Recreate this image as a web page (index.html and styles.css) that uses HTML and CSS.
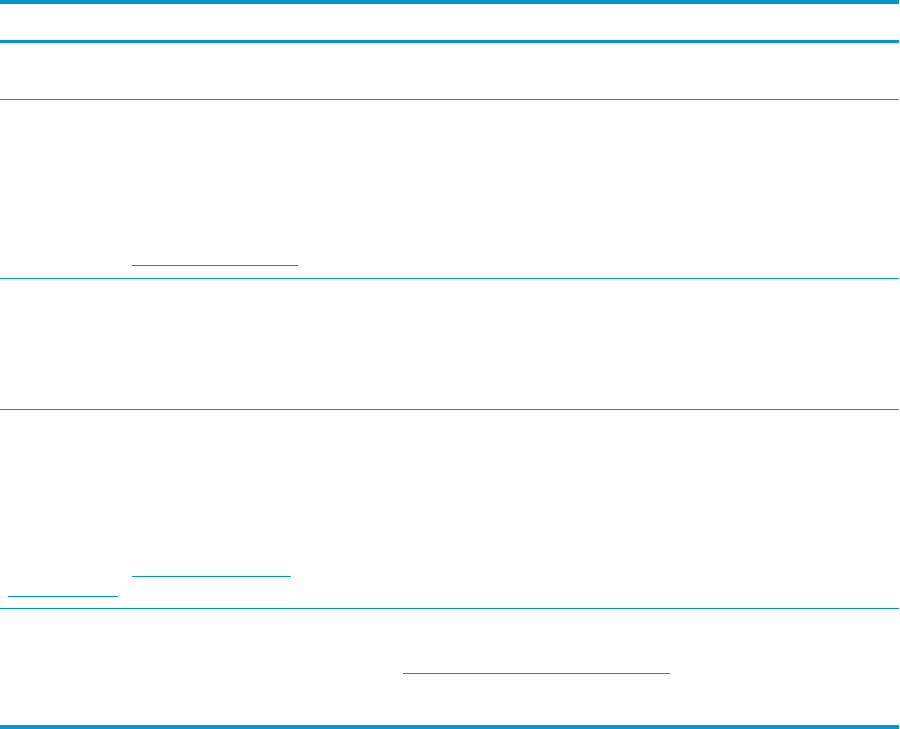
FILE: index.html
```html
<!DOCTYPE html>
<html lang="en">
<head>
<meta charset="utf-8">
<title>Table</title>
<link rel="stylesheet" href="styles.css">
</head>
<body>
<div class="table">
  <div class="row head"></div>
  <div class="row r1"></div>
  <div class="row r2">
    <div class="cell c1"></div>
    <div class="cell c2"><a class="link l-r2"></a></div>
  </div>
  <div class="row r3"></div>
  <div class="row r4">
    <div class="cell c1"><a class="link l-r4b"></a></div>
    <div class="cell c2"><a class="link l-r4a"></a></div>
  </div>
  <div class="row r5">
    <div class="cell c1"></div>
    <div class="cell c2"><a class="link l-r5"></a></div>
  </div>
</div>
</body>
</html>
```

FILE: styles.css
```css
html, body {
  margin: 0;
  padding: 0;
  background: #ffffff;
  font-family: "Liberation Sans", Arial, sans-serif;
}

.table {
  width: 899px;
  border-top: 4px solid #0096d6;
  border-bottom: 4px solid #0096d6;
}

.row {
  display: grid;
  grid-template-columns: 124px 1fr;
  border-bottom: 1px solid #0096d6;
}

.row.head {
  height: 36px;
  border-bottom: 3px solid #0096d6;
}

.row.r1 { height: 56px; }
.row.r2 { height: 178px; }
.row.r3 { height: 130px; }
.row.r4 { height: 198px; }
.row.r5 { height: 116px; border-bottom: none; }

.cell {
  padding-left: 8px;
}

.link {
  display: block;
  height: 1px;
  background: #0096d6;
}

.l-r2 { margin-top: 165px; width: 166px; }
.l-r4a { margin-top: 166px; width: 159px; }
.l-r4b { margin-top: 186px; width: 110px; }
.l-r5 { margin-top: 64px; margin-left: 271px; width: 267px; }
```
